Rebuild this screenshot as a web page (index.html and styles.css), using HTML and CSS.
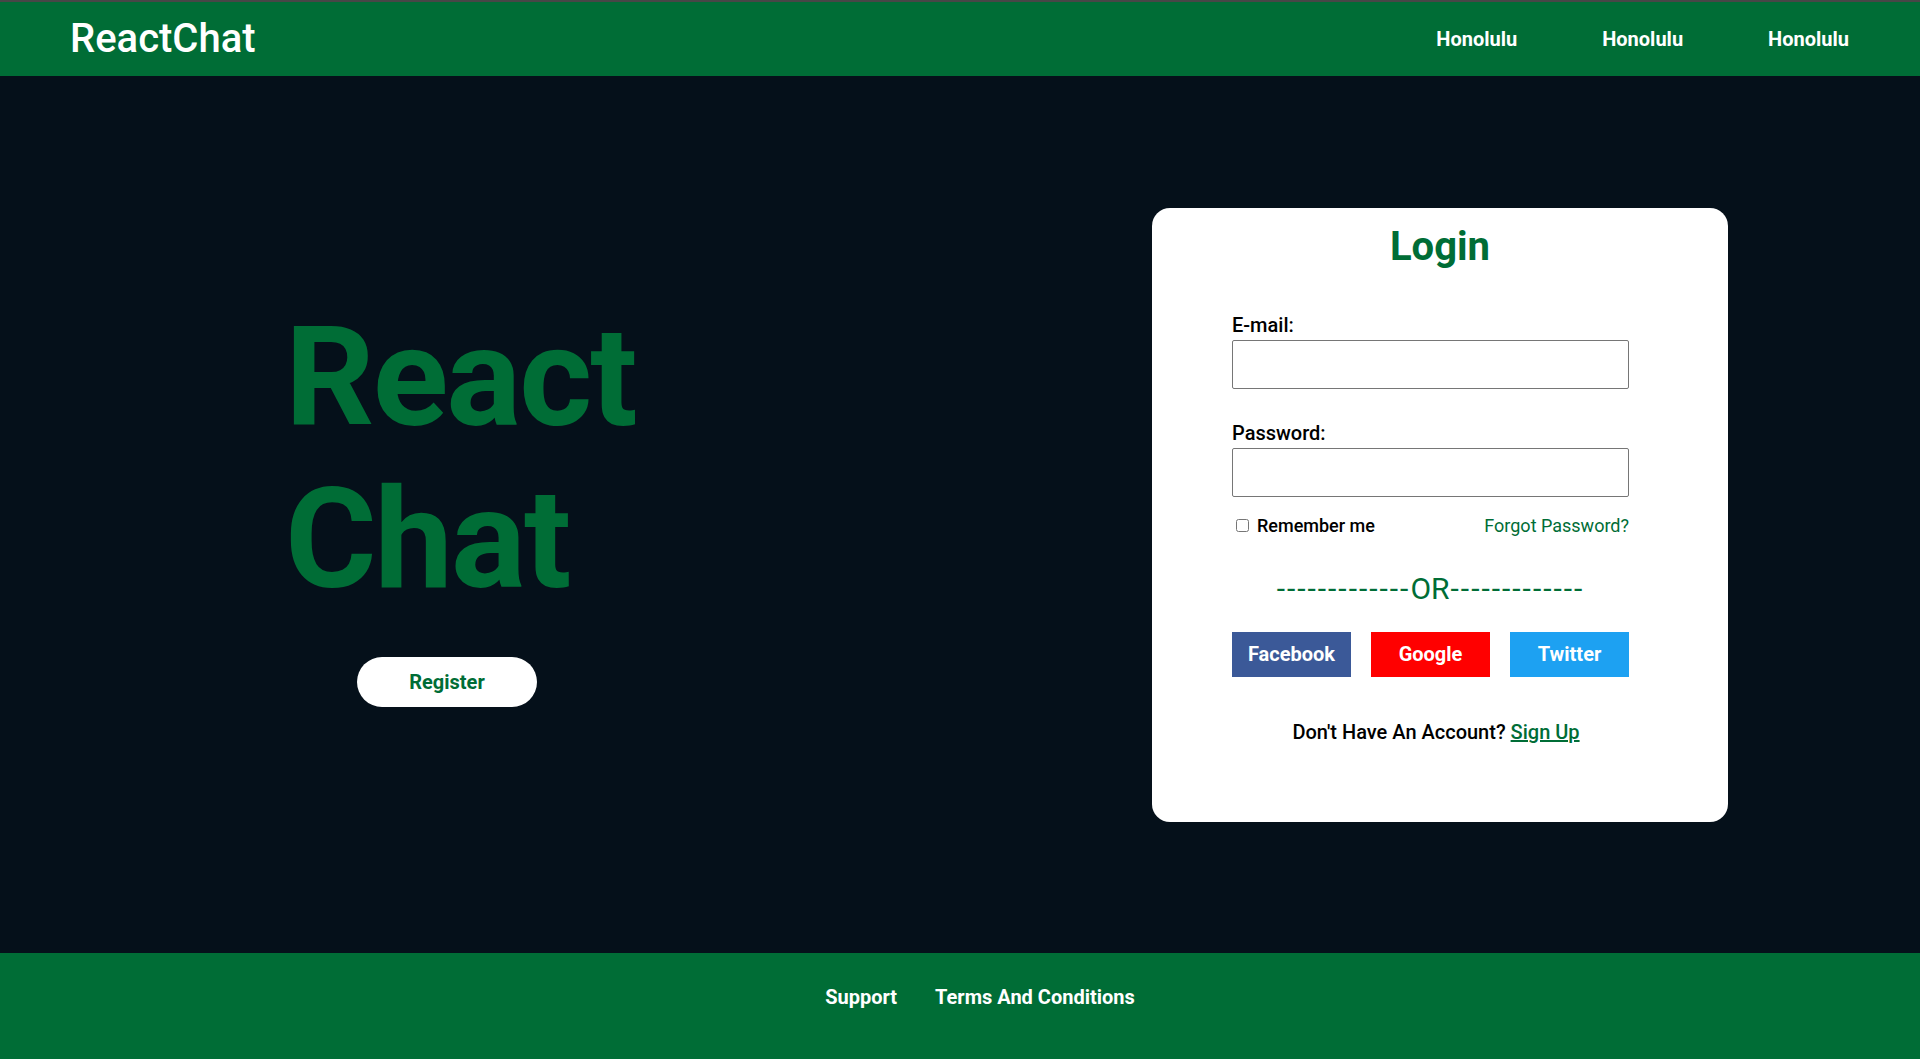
FILE: index.html
```html
<!DOCTYPE html>
<html lang="en">
<head>
<meta charset="utf-8">
<title>ReactChat</title>
<link rel="stylesheet" href="styles.css">
</head>
<body>
<header class="topbar">
  <div class="logo">ReactChat</div>
  <nav class="nav">
    <a class="nav-link" href="#">Honolulu</a>
    <a class="nav-link" href="#">Honolulu</a>
    <a class="nav-link" href="#">Honolulu</a>
  </nav>
</header>
<main class="main">
  <section class="hero">
    <h1 class="hero-title">React<br>Chat</h1>
    <button class="register">Register</button>
  </section>
  <section class="side">
    <div class="card">
      <h2 class="card-title">Login</h2>
      <form class="form">
        <label class="label label-first" for="email">E-mail:</label>
        <input class="field" id="email" type="text">
        <label class="label" for="pass">Password:</label>
        <input class="field" id="pass" type="password">
        <div class="row">
          <label class="remember"><input class="check" type="checkbox">Remember me</label>
          <a class="forgot" href="#">Forgot Password?</a>
        </div>
        <div class="or"><span class="dashes">-------------</span>OR<span class="dashes dashes-right">-------------</span></div>
        <div class="socials">
          <button type="button" class="social fb">Facebook</button>
          <button type="button" class="social gg">Google</button>
          <button type="button" class="social tw">Twitter</button>
        </div>
        <p class="signup">Don't Have An Account? <a class="signup-link" href="#">Sign Up</a></p>
      </form>
    </div>
  </section>
</main>
<footer class="footer">
  <ul class="footer-links">
    <li><a class="footer-link" href="#">Support</a></li>
    <li><a class="footer-link" href="#">Terms And Conditions</a></li>
  </ul>
</footer>
</body>
</html>
```
FILE: styles.css
```css
* { box-sizing: border-box; }
html, body { margin: 0; padding: 0; }
body {
  font-family: Roboto, "Liberation Sans", Arial, sans-serif;
  background: #05101a;
  color: #000;
  width: 1920px;
  height: 1059px;
  overflow: hidden;
}
.topbar {
  height: 76px;
  border-top: 2px solid #474747;
  background: #006d36;
  display: flex;
  align-items: center;
  justify-content: space-between;
  padding: 0 71px 0 70px;
}
.logo {
  color: #fff;
  font-size: 40px;
  font-weight: 500;
  margin-top: -1px;
}
.nav { display: flex; gap: 85px; }
.nav-link {
  color: #fff;
  text-decoration: none;
  font-size: 20px;
  font-weight: 700;
  line-height: 23px;
}
.main {
  height: 877px;
  display: flex;
}
.hero {
  width: 960px;
  padding: 220px 0 0 285px;
  display: flex;
  flex-direction: column;
  align-items: flex-start;
}
.hero-title {
  margin: 0;
  color: #006d36;
  font-size: 140px;
  font-weight: 700;
  line-height: 162px;
  letter-spacing: -2px;
}
.register {
  margin: 37px 0 0 72px;
  width: 180px;
  height: 50px;
  border: none;
  border-radius: 25px;
  background: #fff;
  color: #006d36;
  font-family: Roboto, "Liberation Sans", Arial, sans-serif;
  font-size: 20px;
  font-weight: 700;
}
.side {
  width: 960px;
  display: flex;
  align-items: center;
  justify-content: center;
}
.card {
  width: 576px;
  height: 614px;
  background: #fff;
  border-radius: 18px;
  padding: 14px 99px 0 80px;
}
.card-title {
  margin: 0 -99px 0 -80px;
  text-align: center;
  color: #006d36;
  font-size: 40px;
  font-weight: 700;
  line-height: 49px;
}
.form { width: 397px; }
.label {
  display: block;
  font-size: 20px;
  font-weight: 500;
  line-height: 23px;
  margin: 33px 0 3px;
}
.label-first { margin-top: 43px; }
.field {
  display: block;
  width: 397px;
  height: 49px;
  border: 1px solid #767676;
  border-radius: 2px;
  background: #fff;
}
.row {
  margin-top: 18px;
  display: flex;
  align-items: center;
  justify-content: space-between;
  line-height: 21px;
  font-size: 18px;
}
.remember {
  display: flex;
  align-items: center;
  font-weight: 500;
}
.check {
  width: 13px;
  height: 13px;
  margin: 0 8px 0 4px;
}
.forgot {
  color: #006d36;
  text-decoration: none;
}
.or {
  margin-top: 35px;
  text-align: center;
  color: #006d36;
  font-size: 30px;
  line-height: 35px;
  white-space: nowrap;
}
.dashes { letter-spacing: 2px; }
.dashes-right { margin-left: 1px; }
.socials {
  margin-top: 26px;
  display: flex;
  gap: 20px;
}
.social {
  width: 119px;
  height: 45px;
  border: none;
  color: #fff;
  font-family: Roboto, "Liberation Sans", Arial, sans-serif;
  font-size: 20px;
  font-weight: 700;
}
.fb { background: #3b5998; }
.gg { background: #ff0000; }
.tw { background: #1da1f2; }
.signup {
  margin: 44px -91px 0 -80px;
  text-align: center;
  font-size: 20px;
  font-weight: 500;
  line-height: 23px;
}
.signup-link { color: #006d36; }
.footer {
  height: 106px;
  background: #006d36;
  padding-top: 33px;
}
.footer-links {
  list-style: none;
  margin: 0;
  padding: 0 0 0 40px;
  display: flex;
  justify-content: center;
  gap: 38px;
}
.footer-link {
  color: #fff;
  text-decoration: none;
  font-size: 20px;
  font-weight: 700;
  line-height: 23px;
}
```
